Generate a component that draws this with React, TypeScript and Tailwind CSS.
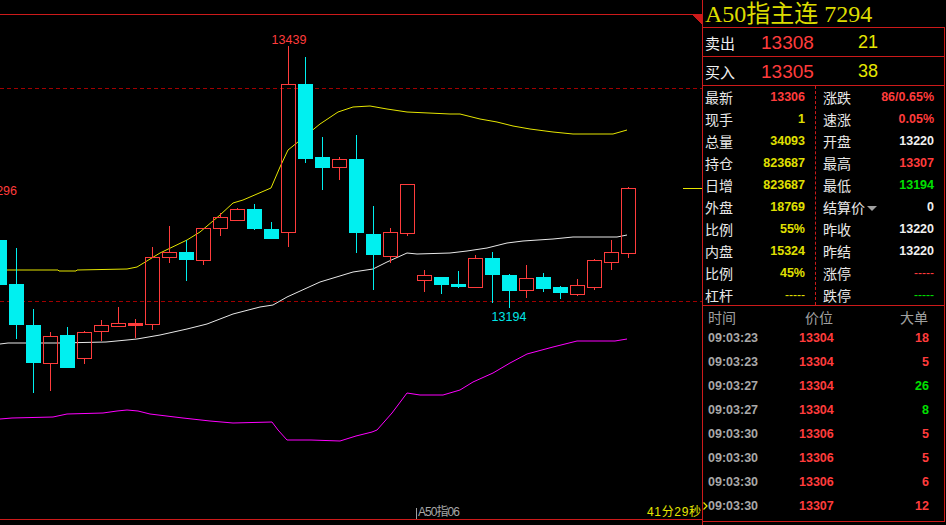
import React from "react";

type C = [string, number, number, number, number];

const candles: C[] = [
  ["c", 240, 285, 240, 285],
  ["c", 284, 325, 248, 339],
  ["c", 325, 363, 309, 393],
  ["r", 336, 363, 332, 391],
  ["c", 335, 368, 327, 368],
  ["r", 332, 358, 331, 364],
  ["r", 325, 331, 320, 341],
  ["r", 323, 326, 307, 327],
  ["r", 323, 325, 319, 338],
  ["r", 257, 324, 247, 330],
  ["r", 252, 257, 226, 263],
  ["c", 252, 260, 240, 281],
  ["r", 228, 260, 228, 265],
  ["r", 217, 228, 213, 236],
  ["r", 209, 220, 208, 221],
  ["c", 209, 229, 204, 230],
  ["c", 229, 239, 222, 239],
  ["r", 84, 232, 46, 247],
  ["c", 84, 159, 57, 163],
  ["c", 157, 168, 137, 190],
  ["r", 159, 167, 157, 180],
  ["c", 159, 233, 135, 253],
  ["c", 234, 255, 206, 290],
  ["r", 232, 256, 228, 263],
  ["r", 184, 233, 184, 236],
  ["r", 275, 280, 270, 292],
  ["c", 277, 285, 277, 294],
  ["c", 284, 287, 271, 288],
  ["r", 258, 287, 255, 288],
  ["c", 258, 275, 252, 303],
  ["c", 275, 291, 274, 308],
  ["r", 278, 290, 265, 298],
  ["c", 277, 289, 273, 292],
  ["c", 287, 293, 286, 299],
  ["r", 285, 294, 279, 296],
  ["r", 260, 287, 259, 290],
  ["r", 252, 262, 240, 270],
  ["r", 188, 253, 187, 258],
];

const RED = "#ff3c3c";
const CYAN = "#00f0f0";

const yellowLine =
  "0,270 58,270 59,271 76,271 77,270 127,269 137,267 160,253 187,240 200,232 220,215 233,203 243,200 271,188 280,167 288,150 293,146 320,124 338,112 353,107 370,106 387,109 407,112 450,114 460,114 480,119 497,122 513,126 530,129 553,132 573,134 613,134 627,130";
const whiteLine =
  "0,344 8,343 59,343 106,342 127,340 137,339 160,335 187,329 207,324 233,314 260,307 273,305 287,297 320,282 353,272 373,269 387,262 407,253 417,254 450,253 467,251 487,248 507,243 523,241 553,239 573,237 617,237 627,235";
const magentaLine =
  "0,419 12,418 53,417 67,414 103,413 117,411 127,410 138,411 150,414 183,418 210,421 233,423 272,422 278,430 287,440 311,440 340,441 356,436 372,432 377,430 392,413 407,393 420,395 443,395 460,390 473,382 493,373 510,363 527,354 553,347 577,341 615,341 627,339";

function Chart() {
  return (
    <svg width={702} height={525} className="shrink-0 block" shapeRendering="crispEdges">
      <line x1={0} y1={14.5} x2={702} y2={14.5} stroke="#cc1a1a" />
      <polygon points="692,15 702,15 702,25" fill="#cc1a1a" />
      <line x1={0} y1={88.5} x2={702} y2={88.5} stroke="#a00000" strokeDasharray="4 3" />
      <line x1={0} y1={301.5} x2={702} y2={301.5} stroke="#a00000" strokeDasharray="4 3" />
      <line x1={0} y1={519.5} x2={702} y2={519.5} stroke="#cc1a1a" />
      <line x1={683} y1={188.5} x2={702} y2={188.5} stroke="#e6e600" />

      <polyline points={yellowLine} fill="none" stroke="#e6e600" strokeWidth={1} shapeRendering="auto" />
      <polyline points={whiteLine} fill="none" stroke="#e8e8e8" strokeWidth={1} shapeRendering="auto" />
      <polyline points={magentaLine} fill="none" stroke="#ff00ff" strokeWidth={1} shapeRendering="auto" />

      {candles.map((c, i) => {
        const left = -8 + 17 * i;
        const cx = left + 7.5;
        const [t, bt, bb, wt, wb] = c;
        if (t === "c") {
          return (
            <g key={i}>
              <line x1={cx} y1={wt} x2={cx} y2={wb} stroke={CYAN} />
              <rect x={left} y={bt} width={15} height={Math.max(bb - bt, 2)} fill={CYAN} />
            </g>
          );
        }
        const h = bb - bt;
        return (
          <g key={i}>
            {wt < bt && <line x1={cx} y1={wt} x2={cx} y2={bt} stroke={RED} />}
            {wb > bb && <line x1={cx} y1={bb} x2={cx} y2={wb} stroke={RED} />}
            {h <= 2 ? (
              <rect x={left} y={bt} width={15} height={3} fill={RED} />
            ) : (
              <rect x={left + 0.5} y={bt + 0.5} width={14} height={h} fill="none" stroke={RED} />
            )}
          </g>
        );
      })}

      <g style={{ fontFamily: '"Liberation Sans", "Noto Sans CJK SC", sans-serif' }} shapeRendering="auto">
        <text x={289} y={44} fill={RED} fontSize={12.5} textAnchor="middle">13439</text>
        <text x={509} y={321} fill="#00e6e6" fontSize={12.5} textAnchor="middle">13194</text>
        <text x={17} y={195} fill={RED} fontSize={12.5} textAnchor="end">13296</text>
        <line x1={416.5} y1={508} x2={416.5} y2={519} stroke="#a0a0a0" />
        <text x={418} y={516} fill="#a8a8a8" fontSize={12} textLength={42}>A50指06</text>
        <text x={647} y={516} fill="#e6e600" fontSize={12} textLength={54}>41分29秒</text>
      </g>
    </svg>
  );
}

const Y = "text-[#e0e000]";
const R = "text-[#ff3c3c]";
const G = "text-[#00e000]";
const W = "text-[#f0f0f0]";

type Stat = { l: string; v: string; c: string; dash?: boolean; tri?: boolean };

const leftStats: Stat[] = [
  { l: "最新", v: "13306", c: R },
  { l: "现手", v: "1", c: Y },
  { l: "总量", v: "34093", c: Y },
  { l: "持仓", v: "823687", c: Y },
  { l: "日增", v: "823687", c: Y },
  { l: "外盘", v: "18769", c: Y },
  { l: "比例", v: "55%", c: Y },
  { l: "内盘", v: "15324", c: Y },
  { l: "比例", v: "45%", c: Y },
  { l: "杠杆", v: "-----", c: Y, dash: true },
];
const rightStats: Stat[] = [
  { l: "涨跌", v: "86/0.65%", c: R },
  { l: "速涨", v: "0.05%", c: R },
  { l: "开盘", v: "13220", c: W },
  { l: "最高", v: "13307", c: R },
  { l: "最低", v: "13194", c: G },
  { l: "结算价", v: "0", c: W, tri: true },
  { l: "昨收", v: "13220", c: W },
  { l: "昨结", v: "13220", c: W },
  { l: "涨停", v: "-----", c: R, dash: true },
  { l: "跌停", v: "-----", c: G, dash: true },
];

const ticks: [string, string, string, string, boolean][] = [
  ["09:03:23", "13304", "18", R, false],
  ["09:03:23", "13304", "5", R, false],
  ["09:03:27", "13304", "26", G, false],
  ["09:03:27", "13304", "8", G, false],
  ["09:03:30", "13306", "5", R, false],
  ["09:03:30", "13306", "5", R, false],
  ["09:03:30", "13306", "6", R, false],
  ["09:03:30", "13307", "12", R, true],
];

const CJK = '"Noto Sans CJK SC", "Noto Sans", sans-serif';
const NUM = '"Liberation Sans", Arial, sans-serif';

function StatCell({ s, left }: { s: Stat; left: boolean }) {
  return (
    <div className={`flex h-[22px] items-center ${left ? "pl-[2px] pr-[10px]" : "pl-[7px] pr-[10px]"}`}>
      <span className="text-[14px] leading-none text-[#e8e8e8] flex items-center" style={{ fontFamily: CJK }}>
        {s.l}
        {s.tri && (
          <svg width={10} height={6} className="ml-[2px] mt-[3px]">
            <polygon points="0,0 10,0 5,5" fill="#a0a0a0" />
          </svg>
        )}
      </span>
      <span
        className={`ml-auto leading-none ${s.c} ${s.dash ? "text-[12px] font-normal" : "text-[12.5px] font-bold"}`}
        style={{ fontFamily: NUM }}
      >
        {s.v}
      </span>
    </div>
  );
}

function Panel() {
  return (
    <div className="flex w-[243px] shrink-0 flex-col border-l border-[#cc1a1a]">
      <div
        className="flex h-[27px] items-center pl-[2px] text-[24px] leading-none text-[#dcdc00] whitespace-nowrap"
        style={{ fontFamily: '"Liberation Serif", "Noto Sans CJK SC", serif' }}
      >
        A50指主连 7294
      </div>
      <div className="flex flex-col border-y border-r border-[#cc1a1a]">
        <div className="flex h-[29px] items-center pl-[2px] border-b border-[#cc1a1a]">
          <span className="w-[56px] text-[15px] leading-none text-[#f0f0f0]" style={{ fontFamily: CJK }}>卖出</span>
          <span className="w-[97px] text-[19px] leading-none text-[#ff3c3c]" style={{ fontFamily: NUM }}>13308</span>
          <span className="text-[18px] leading-none text-[#e6e600]" style={{ fontFamily: NUM }}>21</span>
        </div>
        <div className="flex h-[29px] items-center pl-[2px] border-b border-[#cc1a1a]">
          <span className="w-[56px] text-[15px] leading-none text-[#f0f0f0]" style={{ fontFamily: CJK }}>买入</span>
          <span className="w-[97px] text-[19px] leading-none text-[#ff3c3c]" style={{ fontFamily: NUM }}>13305</span>
          <span className="text-[18px] leading-none text-[#e6e600]" style={{ fontFamily: NUM }}>38</span>
        </div>
        <div className="flex h-[220px] overflow-hidden border-b border-[#cc1a1a]">
          <div className="w-[113px] border-r border-dashed border-[#cc1a1a]">
            {leftStats.map((s, i) => (
              <StatCell key={i} s={s} left />
            ))}
          </div>
          <div className="flex-1">
            {rightStats.map((s, i) => (
              <StatCell key={i} s={s} left={false} />
            ))}
          </div>
        </div>
        <div className="flex h-[215px] flex-col">
          <div className="flex h-[20px] items-center pt-[2px] text-[14px] leading-none text-[#a0a0a0]" style={{ fontFamily: CJK }}>
            <span className="w-[102px] pl-[5px]">时间</span>
            <span>价位</span>
            <span className="ml-auto pr-[16px]">大单</span>
          </div>
          {ticks.map((t, i) => (
            <div key={i} className="flex h-[24px] items-center text-[12.5px] font-bold leading-none" style={{ fontFamily: NUM }}>
              <span className="flex w-[96px] items-center">
                <span className="flex w-[5px] justify-start">
                  {t[4] && (
                    <svg width={5} height={8}>
                      <polyline points="0.5,0.5 4,4 0.5,7.5" fill="none" stroke="#e6e600" strokeWidth={1.3} />
                    </svg>
                  )}
                </span>
                <span className="text-[#a8a8a8]">{t[0]}</span>
              </span>
              <span className="text-[#ff3c3c]">{t[1]}</span>
              <span className={`ml-auto pr-[15px] ${t[3]}`}>{t[2]}</span>
            </div>
          ))}
        </div>
      </div>
    </div>
  );
}

export default function App() {
  return (
    <div className="flex h-[525px] w-[946px] overflow-hidden bg-black">
      <Chart />
      <Panel />
    </div>
  );
}
